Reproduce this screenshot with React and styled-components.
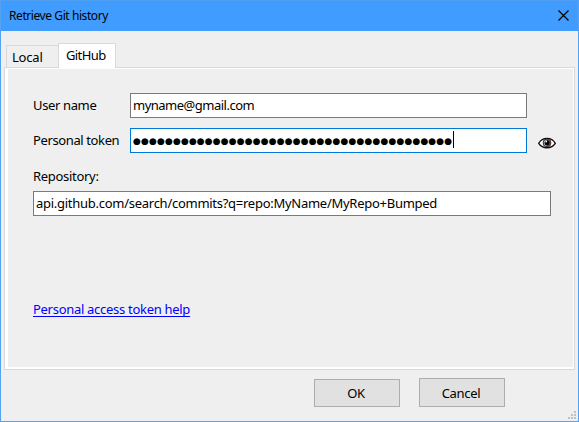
import React from "react";
import styled, { createGlobalStyle } from "styled-components";

const GlobalStyle = createGlobalStyle`
  * { box-sizing: border-box; }
  body {
    margin: 0;
    font-family: "Noto Sans", "Open Sans", sans-serif;
    font-size: 13px;
    line-height: 18px;
    color: #000;
  }
`;

const Window = styled.div`
  width: 579px;
  height: 422px;
  display: flex;
  flex-direction: column;
  position: relative;
  background: #efefef;
  border: 1px solid #54a2f2;
  border-top: 0;
  overflow: hidden;
`;

const TitleBar = styled.header`
  height: 31px;
  flex: none;
  display: flex;
  align-items: center;
  justify-content: space-between;
  padding: 0 9px 1px 8px;
  background: #409cff;
  border-top: 1px solid #4f9ff2;
`;

const Text = styled.span`
  white-space: pre;
  font-size: ${(p) => p.$size || 13}px;
  letter-spacing: ${(p) => p.$track ?? -0.3}px;
`;

const CloseIcon = styled.svg`
  width: 11px;
  height: 11px;
  display: block;
`;

const Tabs = styled.nav`
  height: 36px;
  flex: none;
  display: flex;
  align-items: flex-end;
  padding-left: 5px;
`;

const Tab = styled.div`
  width: ${(p) => p.$width}px;
  height: ${(p) => (p.$active ? 25 : 22)}px;
  margin-bottom: ${(p) => (p.$active ? -1 : 0)}px;
  padding-top: 2px;
  padding-left: ${(p) => (p.$active ? 7 : 5)}px;
  border: 1px solid #d9d9d9;
  border-bottom: 0;
  border-right-width: ${(p) => (p.$active ? 1 : 0)}px;
  background: ${(p) => (p.$active ? "#fff" : "#efefef")};
  z-index: 1;
`;

const Panel = styled.main`
  width: 571px;
  height: 303px;
  flex: none;
  margin-left: 3px;
  border: 1px solid #d9d9d9;
  background: #fff;
  padding: 1px 1px 2px 3px;
`;

const Form = styled.form`
  height: 100%;
  background: #efefef;
  padding: 24px 0 0 25px;
`;

const Row = styled.div`
  display: flex;
  align-items: center;
  height: 25px;
  margin-bottom: 10px;
`;

const Label = styled.label`
  width: 97px;
  flex: none;
  padding-bottom: 1px;
`;

const Field = styled.div`
  width: ${(p) => p.$width}px;
  height: 25px;
  flex: none;
  display: flex;
  align-items: center;
  padding: 0 0 1px 2px;
  background: #fff;
  border: 1px solid ${(p) => (p.$focus ? "#0078d7" : "#7a7a7a")};
`;

const Dots = styled.span`
  width: 320px;
  font-family: "DejaVu Sans", sans-serif;
  font-size: 9px;
  line-height: 18px;
  letter-spacing: 0.13px;
  white-space: nowrap;
  margin-top: 2px;
`;

const Caret = styled.span`
  width: 1px;
  height: 17px;
  margin-bottom: 2px;
  background: #000;
`;

const EyeIcon = styled.svg`
  width: 18px;
  height: 14px;
  margin: 5px 0 0 11px;
`;

const RepositoryLabel = styled.div`
  height: 18px;
  margin: 14px 0 6px;
`;

const HelpLink = styled.a`
  display: block;
  width: max-content;
  margin-top: 84px;
  color: #0000ff;
  text-decoration: underline;
  text-underline-offset: 2px;
  text-decoration-thickness: 1px;
  text-decoration-skip-ink: none;
`;

const Footer = styled.footer`
  display: flex;
  align-items: flex-end;
  gap: 19px;
  height: 37px;
  padding-left: 313px;
`;

const Button = styled.button`
  width: 86px;
  height: ${(p) => p.$height}px;
  padding: 0 2px 0 0;
  border: 1px solid #adadad;
  background: #e1e1e1;
  color: #000;
  font: inherit;
`;

const Grip = styled.svg`
  position: absolute;
  right: 2px;
  bottom: 2px;
  width: 8px;
  height: 8px;
`;

export default function App() {
  return (
    <>
      <GlobalStyle />
      <Window>
        <TitleBar>
          <Text $size={12} $track={-0.42}>Retrieve Git history</Text>
          <CloseIcon viewBox="0 0 11 11">
            <path d="M.5 .5 10.5 10.5M10.5 .5 .5 10.5" stroke="#000" strokeWidth="1.2" />
          </CloseIcon>
        </TitleBar>
        <Tabs>
          <Tab $width={52}><Text $track={-0.2}>Local</Text></Tab>
          <Tab $width={58} $active><Text $track={-0.6}>GitHub</Text></Tab>
        </Tabs>
        <Panel>
          <Form>
            <Row>
              <Label><Text $track={-0.36}>User name</Text></Label>
              <Field $width={397}><Text $track={-0.5}>myname@gmail.com</Text></Field>
            </Row>
            <Row>
              <Label><Text $track={-0.38}>Personal token</Text></Label>
              <Field $width={397} $focus>
                <Dots>{"●".repeat(40)}</Dots>
                <Caret />
              </Field>
              <EyeIcon viewBox="0 0 18 14">
                <path d="M.7 7.3C4.5 .8 13.5 .8 17.3 7.3 13.5 13.2 4.5 13.2 .7 7.3Z" fill="#fff" stroke="#120b08" strokeWidth="1.3" />
                <circle cx="9" cy="6.9" r="3.9" fill="#9db4c5" stroke="#33241c" />
                <path d="M9 3A3.9 3.9 0 0 1 9 10.8Z" fill="#5a4336" />
                <circle cx="9" cy="7" r="2.4" fill="#000" />
                <circle cx="8.2" cy="5.6" r=".9" fill="#fff" />
              </EyeIcon>
            </Row>
            <RepositoryLabel><Text>Repository:</Text></RepositoryLabel>
            <Field $width={518}>
              <Text $track={-0.27}>api.github.com/search/commits?q=repo:MyName/MyRepo+Bumped</Text>
            </Field>
            <HelpLink><Text $track={-0.29}>Personal access token help</Text></HelpLink>
          </Form>
        </Panel>
        <Footer>
          <Button $height={28}><Text>OK</Text></Button>
          <Button $height={29}><Text>Cancel</Text></Button>
        </Footer>
        <Grip viewBox="0 0 8 8" fill="#bfbfbf" shapeRendering="crispEdges">
          <path d="M6 0h2v2H6zM3 3h2v2H3zM6 3h2v2H6zM0 6h2v2H0zM3 6h2v2H3zM6 6h2v2H6z" />
        </Grip>
      </Window>
    </>
  );
}
